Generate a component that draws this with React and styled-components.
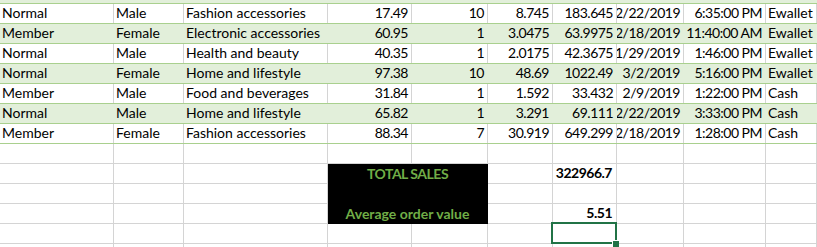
import React from "react";
import styled, { createGlobalStyle } from "styled-components";

const COLS = [114, 70, 144, 84, 76, 65, 64, 67, 82, 51];
const template = COLS.map((w) => `${w}px`).join(" ");
const ALIGN = ["left", "left", "left", "right", "right", "right", "right", "right", "right", "left"];

// first row is scrolled almost out of view, only the slashes of its date peek through
const rows = [
  ["", "", "", "", "", "", "", "1/27/2019", "", ""],
  ["Normal", "Male", "Fashion accessories", "17.49", "10", "8.745", "183.645", "2/22/2019", "6:35:00 PM", "Ewallet"],
  ["Member", "Female", "Electronic accessories", "60.95", "1", "3.0475", "63.9975", "2/18/2019", "11:40:00 AM", "Ewallet"],
  ["Normal", "Male", "Health and beauty", "40.35", "1", "2.0175", "42.3675", "1/29/2019", "1:46:00 PM", "Ewallet"],
  ["Normal", "Female", "Home and lifestyle", "97.38", "10", "48.69", "1022.49", "3/2/2019", "5:16:00 PM", "Ewallet"],
  ["Member", "Male", "Food and beverages", "31.84", "1", "1.592", "33.432", "2/9/2019", "1:22:00 PM", "Cash"],
  ["Normal", "Male", "Home and lifestyle", "65.82", "1", "3.291", "69.111", "2/22/2019", "3:33:00 PM", "Cash"],
  ["Member", "Female", "Fashion accessories", "88.34", "7", "30.919", "649.299", "2/18/2019", "1:28:00 PM", "Cash"],
];

// empty sheet area below the table: values keyed "row-col"
const extra = {
  "2-7": "322966.7",
  "4-7": "5.51",
};

const GlobalStyle = createGlobalStyle`
  body {
    margin: 0;
    background: #fff;
    font-family: Lato, "Open Sans", sans-serif;
    font-size: 14px;
    color: #000;
  }
`;

const Sheet = styled.div`
  width: 817px;
  height: 247px;
  overflow: hidden;
  background: #fff;
`;

const Table = styled.div`
  margin-top: -16px;
`;

const Row = styled.div`
  display: grid;
  grid-template-columns: ${template};
  height: 20px;
  box-sizing: border-box;
  background: ${(p) => (p.$striped ? "#e2efda" : "#fff")};
  border-bottom: 1px solid #a9d08e;
`;

const Cell = styled.div`
  display: flex;
  align-items: flex-end;
  justify-content: ${(p) => (p.$align === "right" ? "flex-end" : "flex-start")};
  padding: 0 3px 1px ${(p) => (p.$align === "right" ? "0" : "2px")};
  border-right: 1px solid ${(p) => (p.$striped ? "transparent" : "#d4d4d4")};
  white-space: nowrap;
  overflow: hidden;
  line-height: 18px;
  letter-spacing: ${(p) => (p.$align === "right" ? "-0.5px" : "0")};
`;

const Lower = styled.div`
  display: grid;
  grid-template-columns: ${template};
  grid-template-rows: repeat(6, 20px);
`;

const GridCell = styled.div`
  position: relative;
  display: flex;
  align-items: flex-end;
  justify-content: flex-end;
  box-sizing: border-box;
  padding: 0 4px 1px 2px;
  border-right: 1px solid #d4d4d4;
  border-bottom: 1px solid #d4d4d4;
  font-weight: ${(p) => (p.$bold ? 700 : 400)};
  letter-spacing: -0.5px;
  line-height: 18px;

  ${(p) =>
    p.$selected &&
    `
    &::after {
      content: "";
      position: absolute;
      top: -2px;
      left: -2px;
      right: -1px;
      bottom: -1px;
      border: 2px solid #217346;
    }
    &::before {
      content: "";
      position: absolute;
      right: -3px;
      bottom: -4px;
      width: 6px;
      height: 6px;
      background: #217346;
      border-left: 1px solid #fff;
      border-top: 1px solid #fff;
      z-index: 1;
    }
  `}
`;

const SummaryBlock = styled.div`
  grid-column: 4 / span 2;
  grid-row: 2 / span 3;
  margin-left: -1px;
  background: #000;
  display: grid;
  grid-template-rows: repeat(3, 20px);
  color: #70ad47;
  font-weight: 700;
`;

const SummaryLabel = styled.div`
  display: flex;
  align-items: flex-end;
  justify-content: center;
  padding-bottom: 1px;
  line-height: 18px;
  letter-spacing: ${(p) => (p.$tight ? "-0.5px" : "0")};
`;

function App() {
  const lowerCells = [];
  for (let r = 1; r <= 6; r++) {
    for (let c = 1; c <= 10; c++) {
      if (r >= 2 && r <= 4 && (c === 4 || c === 5)) continue;
      const key = `${r}-${c}`;
      lowerCells.push(
        <GridCell key={key} $bold={!!extra[key]} $selected={key === "5-7"}>
          {extra[key]}
        </GridCell>
      );
    }
  }

  return (
    <>
      <GlobalStyle />
      <Sheet>
        <Table>
          {rows.map((row, i) => {
            const striped = i % 2 === 0;
            return (
              <Row key={i} $striped={striped}>
                {row.map((value, j) => (
                  <Cell key={j} $align={ALIGN[j]} $striped={striped}>
                    {value}
                  </Cell>
                ))}
              </Row>
            );
          })}
          <Lower>
            <SummaryBlock>
              <SummaryLabel $tight>TOTAL SALES</SummaryLabel>
              <SummaryLabel />
              <SummaryLabel>Average order value</SummaryLabel>
            </SummaryBlock>
            {lowerCells}
          </Lower>
        </Table>
      </Sheet>
    </>
  );
}

export default App;
